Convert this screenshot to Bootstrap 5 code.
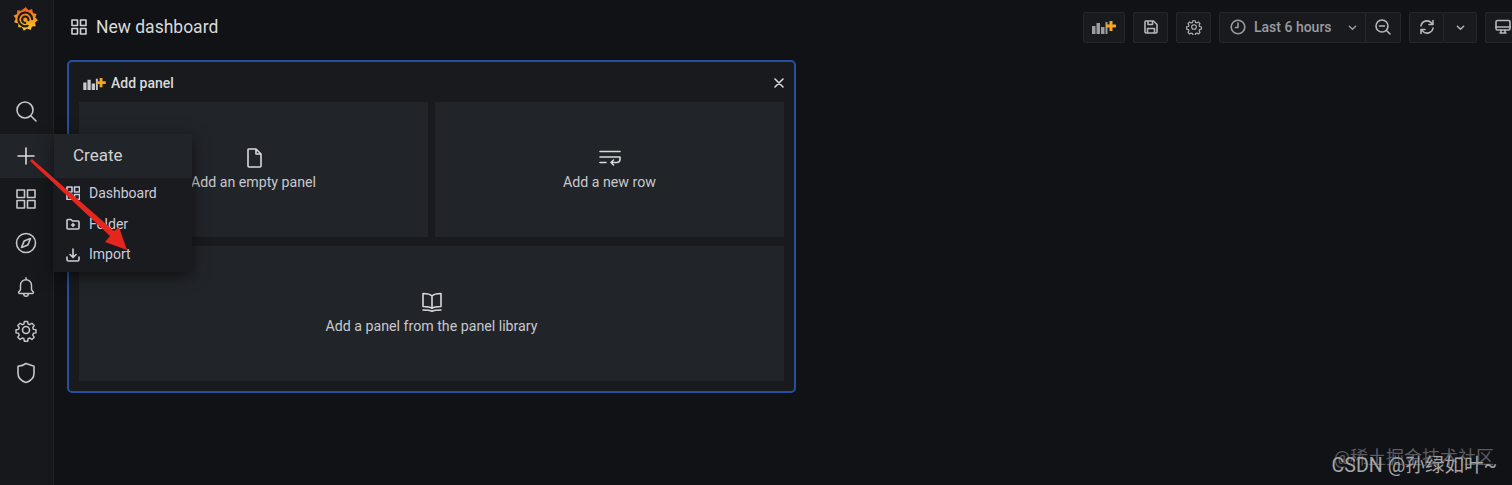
<!DOCTYPE html>
<html lang="en">

<head>
    <meta charset="UTF-8">
    <meta name="viewport" content="width=device-width, initial-scale=1.0">
    <title>New dashboard</title>
    <link href="https://cdn.jsdelivr.net/npm/bootstrap@5.3.3/dist/css/bootstrap.min.css" rel="stylesheet">
    <style>
        html, body { height: 100%; }
        body {
            background: #111216;
            color: #d0d1d3;
            font-family: Roboto, "Liberation Sans", "Noto Sans CJK SC", sans-serif;
            font-size: 14px;
            overflow: hidden;
        }
        svg.ico { fill: none; stroke: currentColor; stroke-width: 1.6; stroke-linecap: round; stroke-linejoin: round; flex: none; }
        .app-shell { height: 485px; position: relative; }
        .side-rail { width: 54px; background: #16181c; border-right: 1px solid #202226; flex: none; }
        .rail-logo { height: 45px; padding-top: 7px; padding-right: 3px; margin-bottom: 44px; }
        .rail-item { height: 44px; color: #c4c6c9; position: relative; padding-right: 2px; }
        .rail-low { height: 43px; }
        .rail-item.is-open { background: #212429; color: #d8d9da; height: 44px; margin-top: 1px; margin-bottom: -1px; }
        .fly-menu { position: absolute; left: 54px; top: 0; width: 138px; background: #191b1f; box-shadow: 0 4px 14px rgba(0, 0, 0, .55); z-index: 5; padding-bottom: 2px; }
        .fly-head { height: 44px; background: #212429; font-size: 17px; padding-left: 19px; color: #d0d1d3; }
        .fly-link { height: 30.7px; padding-left: 12px; gap: 9px; color: #ccccdc; font-size: 14px; }
        .main-pane { min-width: 0; }
        .top-bar { height: 54px; padding: 0 0 0 16px; margin-bottom: 6px; }
        .page-title { font-size: 17.5px; font-weight: 400; color: #d8d9da; margin: 0 0 0 8px; }
        .tool-btn { height: 31px; background: #181a1e; border: 1px solid #25272c; border-radius: 2px; color: #b5b7ba; padding: 0; }
        .tool-wide { width: 42px; }
        .tool-std { width: 35px; }
        .tool-time { width: 147px; gap: 8px; font-weight: 500; color: #9a9ca1; border-radius: 2px 0 0 2px; padding-left: 10px; }
        .tool-join { border-left: 0; border-radius: 0 2px 2px 0; }
        .tool-caret { width: 33px; }
        .tool-group-gap { gap: 8px; margin-right: -8px; }
        .panel-box { width: 729px; height: 333px; margin-left: 13px; border: 2px solid #24509f; border-radius: 5px; background: #181a1e; padding: 0 10px 10px; }
        .panel-top { height: 40px; color: #d8d9da; font-weight: 500; font-size: 14px; padding: 2px 0 0 3px; }
        .panel-grid { display: grid; grid-template-columns: 349px 349px; grid-template-rows: 135px 135px; column-gap: 7px; row-gap: 9px; }
        .add-tile { background: #212429; color: #c7c9cc; gap: 3px; padding-top: 1px; font-size: 14.2px; }
        .add-tile svg.ico { color: #d8d9da; }
        .tile-wide { grid-column: 1 / 3; }
        .close-x { color: #d8d9da; }
        .red-arrow { position: absolute; left: 0; top: 0; z-index: 6; pointer-events: none; }
        .mark-a, .mark-b { position: absolute; white-space: nowrap; z-index: 7; line-height: 1; }
        .mark-a { right: 18px; top: 449px; color: #5b5d60; font-size: 18px; }
        .mark-b { right: 15px; top: 456px; color: #a4a5a7; font-size: 19.6px; }
    </style>
</head>

<body>
    <div class="app-shell d-flex">
        <!-- left rail -->
        <nav class="side-rail d-flex flex-column">
            <div class="rail-logo d-flex justify-content-center">
                <svg width="25" height="27" viewBox="3 3 23.500 25.500">
                    <defs>
                        <linearGradient id="logoGrad" x1="0" y1="1" x2="0" y2="0">
                            <stop offset="0" stop-color="#fcd21f" />
                            <stop offset="1" stop-color="#ee5a24" />
                        </linearGradient>
                    </defs>
                    <path fill="url(#logoGrad)" d="M15 3l2.500 3 3.500-1 .8 3.600 3.400 1-1.200 3.200 2.500 2.600-2.700 2.200.6 3.500-3.500.3-1.400 3.400-3.300-1.400-3 2-1.700-3.200-3.600-.1.1-3.500L4 17.300l1.500-3.300L3.500 11l3.300-1.400.2-3.600 3.500.6z" />
                    <path fill="none" stroke="#1c1a1a" stroke-width="2" stroke-linecap="round" d="M21 14.500a6.500 6.500 0 1 0-4.200 6.300M17.500 15.500a3 3 0 1 0-3 2.500" />
                </svg>
            </div>
            <div class="rail-item d-flex align-items-center justify-content-center">
                <svg class="ico" width="24" height="24" viewBox="0 0 24 24"><circle cx="11" cy="11" r="8" /><path d="M17 17l5 5" /></svg>
            </div>
            <div class="rail-item is-open d-flex align-items-center justify-content-center">
                <svg class="ico" width="24" height="24" viewBox="0 0 24 24"><path d="M12 4v16M4 12h16" /></svg>
                <div class="fly-menu">
                    <div class="fly-head d-flex align-items-center">Create</div>
                    <div class="fly-link d-flex align-items-center">
                        <svg class="ico" width="14" height="14" viewBox="0 0 14 14" stroke-width="1.300"><rect x="1" y="1" width="5" height="5" /><rect x="8.500" y="1" width="5" height="5" /><rect x="1" y="8.500" width="5" height="5" /><rect x="8.500" y="8.500" width="5" height="5" /></svg>
                        <span>Dashboard</span>
                    </div>
                    <div class="fly-link d-flex align-items-center">
                        <svg class="ico" width="14" height="14" viewBox="0 0 14 14"><path d="M1 3.500a1 1 0 0 1 1-1h3l1.500 1.500H12a1 1 0 0 1 1 1v6a1 1 0 0 1-1 1H2a1 1 0 0 1-1-1zM7 6.500v3M5.500 8h3" /></svg>
                        <span>Folder</span>
                    </div>
                    <div class="fly-link d-flex align-items-center">
                        <svg class="ico" width="14" height="14" viewBox="0 0 14 14"><path d="M1 9v2.500a1.500 1.500 0 0 0 1.500 1.500h9a1.500 1.500 0 0 0 1.500-1.500V9M7 1v8M4 6.500L7 9.500l3-3" /></svg>
                        <span>Import</span>
                    </div>
                </div>
            </div>
            <div class="rail-item d-flex align-items-center justify-content-center">
                <svg class="ico" width="24" height="24" viewBox="0 0 24 24"><rect x="3" y="3" width="7.500" height="7.500" /><rect x="13.500" y="3" width="7.500" height="7.500" /><rect x="3" y="13.500" width="7.500" height="7.500" /><rect x="13.500" y="13.500" width="7.500" height="7.500" /></svg>
            </div>
            <div class="rail-item d-flex align-items-center justify-content-center">
                <svg class="ico" width="24" height="24" viewBox="0 0 24 24"><circle cx="12" cy="12" r="9.500" /><path d="M16.500 7.500l-2.600 6.400-6.400 2.600 2.600-6.400z" /></svg>
            </div>
            <div class="rail-item rail-low d-flex align-items-center justify-content-center">
                <svg class="ico" width="22" height="22" viewBox="0 0 24 24"><path d="M12 2v2M6 15V10a6 6 0 0 1 12 0v5l2 2.500a1 1 0 0 1-.8 1.500H4.800a1 1 0 0 1-.8-1.500zM9.500 19v.5a2.500 2.500 0 0 0 5 0V19" /></svg>
            </div>
            <div class="rail-item rail-low d-flex align-items-center justify-content-center">
                <svg class="ico" width="24" height="24" viewBox="0 0 24 24"><circle cx="12" cy="12" r="3.500" /><path d="M10.200 2.500h3.600l.5 2.800 1.900.8 2.400-1.600 2.500 2.500-1.600 2.400.8 1.900 2.800.5v3.400l-2.800.5-.8 1.900 1.600 2.400-2.500 2.500-2.400-1.600-1.900.8-.5 2.800h-3.600l-.5-2.800-1.900-.8-2.400 1.600-2.500-2.500 1.600-2.400-.8-1.900-2.800-.5v-3.400l2.800-.5.8-1.900-1.600-2.400 2.500-2.500 2.400 1.600 1.900-.8z" transform="translate(1.200 1.200) scale(.9)" /></svg>
            </div>
            <div class="rail-item rail-low d-flex align-items-center justify-content-center">
                <svg class="ico" width="24" height="24" viewBox="0 0 24 24"><path d="M12 2.500l8 2.700v7c0 4.500-3.300 7.800-8 9.300-4.700-1.500-8-4.800-8-9.300v-7c3-.3 5.800-1.200 8-2.700z" /></svg>
            </div>
        </nav>

        <!-- main area -->
        <main class="main-pane flex-grow-1">
            <header class="top-bar d-flex align-items-center justify-content-between">
                <div class="d-flex align-items-center">
                    <svg class="ico" width="18" height="18" viewBox="0 0 18 18" stroke-width="1.400"><rect x="2" y="2" width="5.500" height="5.500" /><rect x="10.500" y="2" width="5.500" height="5.500" /><rect x="2" y="10.500" width="5.500" height="5.500" /><rect x="10.500" y="10.500" width="5.500" height="5.500" /></svg>
                    <h1 class="page-title">New dashboard</h1>
                </div>
                <div class="d-flex tool-group-gap">
                    <button class="tool-btn tool-wide d-flex align-items-center justify-content-center" type="button">
                        <svg width="26" height="16" viewBox="0 0 26 16"><path fill="#9a9ca1" d="M1 7h3.500v8H1zM5.500 4h3.500v11H5.500zM10 8h3.500v7H10zM14.500 3h2v12h-2z" /><path fill="#f5a623" d="M18.500 2h3v3.500H25v3h-3.500V12h-3V8.500H15v-3h3.500z" /></svg>
                    </button>
                    <button class="tool-btn tool-std d-flex align-items-center justify-content-center" type="button">
                        <svg class="ico" width="16" height="16" viewBox="0 0 16 16" stroke-width="1.200"><path d="M2 3a1 1 0 0 1 1-1h7.500L14 5.500V13a1 1 0 0 1-1 1H3a1 1 0 0 1-1-1zM5 2v3.500h4.500V2M4.500 14V9.500h7V14" /></svg>
                    </button>
                    <button class="tool-btn tool-std d-flex align-items-center justify-content-center" type="button">
                        <svg class="ico" width="16" height="16" viewBox="0 0 24 24" stroke-width="2"><circle cx="12" cy="12" r="3.500" /><path d="M10.200 2.500h3.600l.5 2.800 1.900.8 2.400-1.600 2.500 2.500-1.600 2.400.8 1.900 2.800.5v3.400l-2.800.5-.8 1.900 1.600 2.400-2.500 2.500-2.400-1.600-1.900.8-.5 2.800h-3.600l-.5-2.800-1.900-.8-2.400 1.600-2.500-2.500 1.600-2.400-.8-1.900-2.800-.5v-3.400l2.800-.5.8-1.900-1.600-2.400 2.500-2.500 2.400 1.600 1.900-.8z" /></svg>
                    </button>
                    <div class="d-flex">
                        <button class="tool-btn tool-time d-flex align-items-center" type="button">
                            <svg class="ico" width="16" height="16" viewBox="0 0 16 16" stroke-width="1.200"><circle cx="8" cy="8" r="6.800" /><path d="M8 4v4.500H5.500" /></svg>
                            <span>Last 6 hours</span>
                            <svg class="ico ms-2" width="9" height="9" viewBox="0 0 10 10" stroke-width="1.500"><path d="M1.500 3.500L5 7l3.500-3.500" /></svg>
                        </button>
                        <button class="tool-btn tool-std tool-join d-flex align-items-center justify-content-center" type="button">
                            <svg class="ico" width="16" height="16" viewBox="0 0 16 16" stroke-width="1.300"><circle cx="7" cy="7" r="6" /><path d="M4.500 7h5M11.500 11.500L15 15" /></svg>
                        </button>
                    </div>
                    <div class="d-flex">
                        <button class="tool-btn tool-std d-flex align-items-center justify-content-center" type="button">
                            <svg class="ico" width="16" height="16" viewBox="0 0 16 16" stroke-width="1.300"><path d="M2 7a6 6 0 0 1 10.500-3l1.500 1.500M14 1.500v4h-4M14 9a6 6 0 0 1-10.500 3L2 10.500M2 14.500v-4h4" /></svg>
                        </button>
                        <button class="tool-btn tool-caret tool-join d-flex align-items-center justify-content-center" type="button">
                            <svg class="ico" width="9" height="9" viewBox="0 0 10 10" stroke-width="1.500"><path d="M1.500 3.500L5 7l3.500-3.500" /></svg>
                        </button>
                    </div>
                    <button class="tool-btn tool-std d-flex align-items-center justify-content-center" type="button">
                        <svg class="ico" width="16" height="16" viewBox="0 0 16 16" stroke-width="1.300"><rect x="1" y="1.500" width="14" height="9.500" rx="1.500" /><path d="M1 8h14M5 14h6M6 11v3M10 11v3" /></svg>
                    </button>
                </div>
            </header>

            <section class="panel-box">
                <div class="panel-top d-flex align-items-center justify-content-between">
                    <div class="d-flex align-items-center gap-1">
                        <svg width="25" height="15" viewBox="0 0 26 16"><path fill="#c7c9cc" d="M1 7h3.500v8H1zM5.500 4h3.500v11H5.500zM10 8h3.500v7H10zM14.500 3h2v12h-2z" /><path fill="#f5a623" d="M18.500 2h3v3.500H25v3h-3.500V12h-3V8.500H15v-3h3.500z" /></svg>
                        <span>Add panel</span>
                    </div>
                    <svg class="ico close-x" width="10" height="10" viewBox="0 0 10 10" stroke-width="1.100"><path d="M1 1l8 8M9 1l-8 8" /></svg>
                </div>
                <div class="panel-grid">
                    <div class="add-tile d-flex flex-column align-items-center justify-content-center">
                        <svg class="ico" width="22" height="22" viewBox="0 0 22 22" stroke-width="1.500"><path d="M5 2.500a1 1 0 0 1 1-.5h7l5 5v12a1 1 0 0 1-1 1H6a1 1 0 0 1-1-1zM13 2v5h5" /></svg>
                        <span>Add an empty panel</span>
                    </div>
                    <div class="add-tile d-flex flex-column align-items-center justify-content-center">
                        <svg class="ico" width="22" height="22" viewBox="0 0 22 22" stroke-width="1.500"><path d="M1 4.500h20M1 10h20M1 15.500h6M21 10v2.500a3 3 0 0 1-3 3h-6M14.500 13L12 15.500l2.500 2.500" /></svg>
                        <span>Add a new row</span>
                    </div>
                    <div class="add-tile tile-wide d-flex flex-column align-items-center justify-content-center">
                        <svg class="ico" width="22" height="22" viewBox="0 0 22 22" stroke-width="1.500"><path d="M11 6c-1.500-1.500-4-2.500-9-2.500v13c5 0 7.500 .5 9 2 1.500-1.500 4-2 9-2v-13c-5 0-7.500 1-9 2.500zM11 6v12.500M2 20c4 0 6.500 0 9 1.200 2.500-1.200 5-1.200 9-1.200" transform="translate(0 -1)" /></svg>
                        <span>Add a panel from the panel library</span>
                    </div>
                </div>
            </section>
        </main>

        <svg class="red-arrow" width="200" height="280" viewBox="0 0 200 280">
            <polygon fill="#e5261f" points="30,161 32,159 114,231 119,227 127,250 105,242 110,236" />
        </svg>
        <div class="mark-a">@稀土掘金技术社区</div>
        <div class="mark-b">CSDN @孙绿如叶~</div>
    </div>

    <script src="https://cdn.jsdelivr.net/npm/bootstrap@5.3.3/dist/js/bootstrap.bundle.min.js"></script>
</body>

</html>
